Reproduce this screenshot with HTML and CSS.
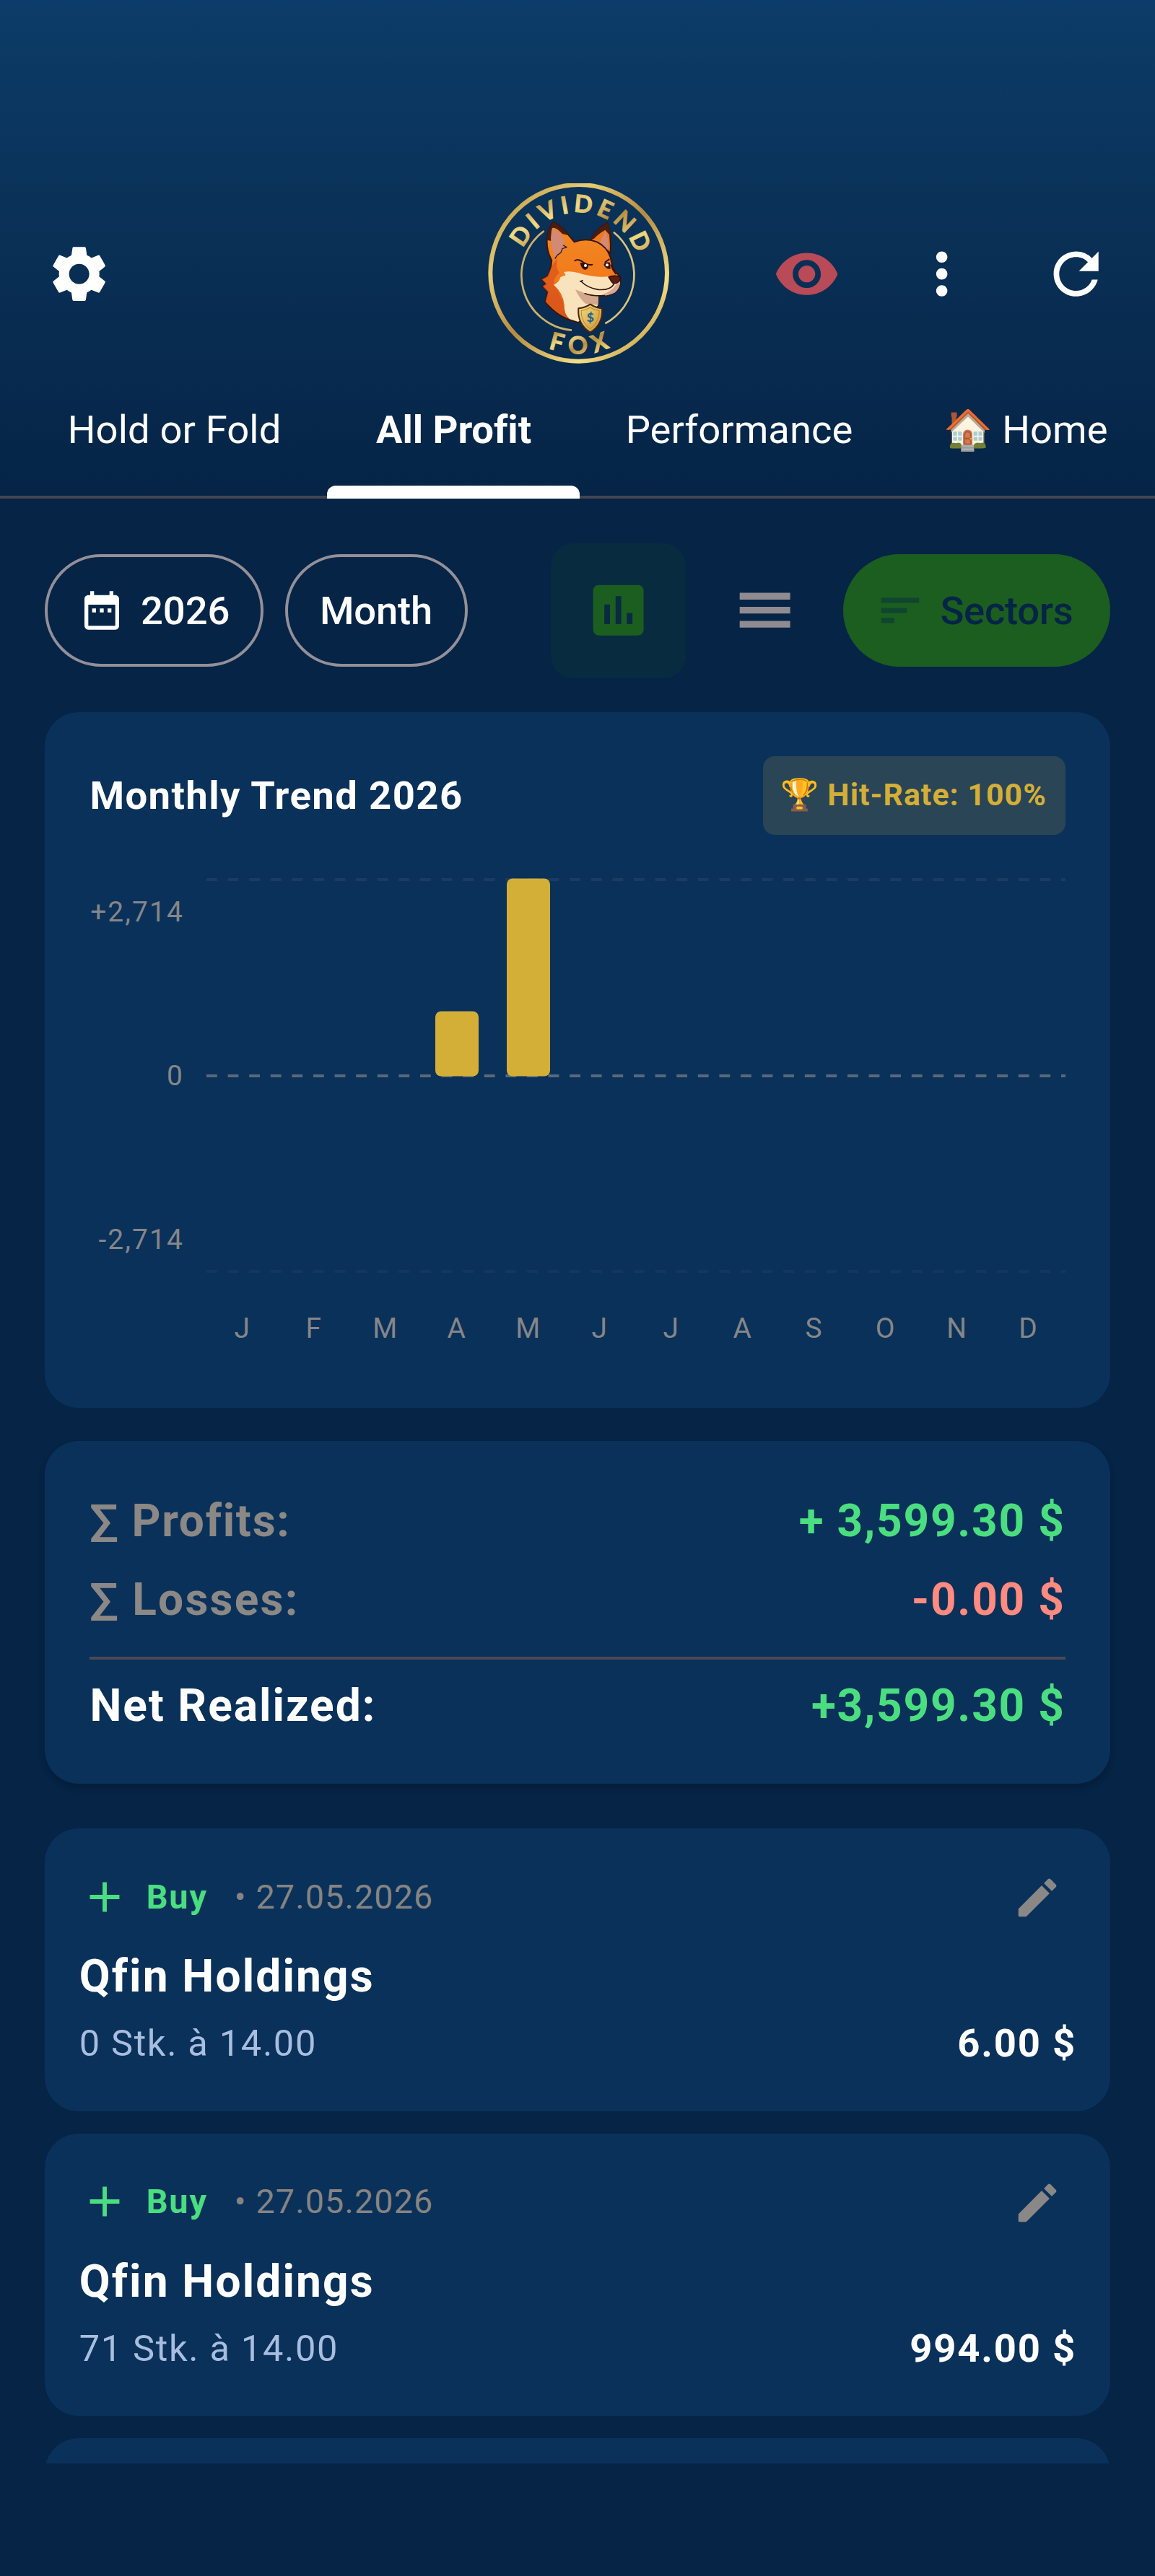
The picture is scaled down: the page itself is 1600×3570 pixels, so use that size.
FILE: index.html
```html
<!DOCTYPE html>
<html lang="en">
<head>
<meta charset="utf-8">
<title>Dividend Fox</title>
<link rel="stylesheet" href="styles.css">
</head>
<body>
<svg class="defs" aria-hidden="true">
  <symbol id="i-plus" viewBox="0 0 24 24"><path d="M19 13h-6v6h-2v-6H5v-2h6V5h2v6h6v2z"/></symbol>
  <symbol id="i-edit" viewBox="0 0 24 24"><path d="M3 17.46v3.04c0 .28.22.5.5.5h3.04c.13 0 .26-.05.35-.15L17.81 9.94l-3.75-3.75L3.15 17.1c-.1.1-.15.22-.15.36zM20.71 7.04a.996.996 0 0 0 0-1.41l-2.34-2.34a.996.996 0 0 0-1.41 0l-1.83 1.83 3.75 3.75 1.83-1.83z"/></symbol>
</svg>

<header class="header">
  <div class="toolbar">
    <button class="icon-btn"><svg class="icon" viewBox="0 0 24 24"><path d="M19.14 12.94c.04-.3.06-.61.06-.94 0-.32-.02-.64-.07-.94l2.03-1.58a.49.49 0 0 0 .12-.61l-1.92-3.32a.488.488 0 0 0-.59-.22l-2.39.96c-.5-.38-1.03-.7-1.62-.94l-.36-2.54a.484.484 0 0 0-.48-.41h-3.84c-.24 0-.43.17-.47.41l-.36 2.54c-.59.24-1.13.57-1.62.94l-2.39-.96c-.22-.08-.47 0-.59.22L2.74 8.87c-.12.21-.08.47.12.61l2.03 1.58c-.05.3-.09.63-.09.94s.02.64.07.94l-2.03 1.58a.49.49 0 0 0-.12.61l1.92 3.32c.12.22.37.29.59.22l2.39-.96c.5.38 1.03.7 1.62.94l.36 2.54c.05.24.24.41.48.41h3.84c.24 0 .44-.17.47-.41l.36-2.54c.59-.24 1.13-.56 1.62-.94l2.39.96c.22.08.47 0 .59-.22l1.92-3.32c.12-.22.07-.47-.12-.61l-2.01-1.58zM12 15.6c-1.98 0-3.6-1.62-3.6-3.6s1.62-3.6 3.6-3.6 3.6 1.62 3.6 3.6-1.62 3.6-3.6 3.6z"/></svg></button>

    <svg class="logo" viewBox="102 74 756 756">
      <defs>
        <linearGradient id="gold" x1="0" y1="0" x2="1" y2="1">
          <stop offset="0" stop-color="#c39a45"/><stop offset=".2" stop-color="#c39a45"/>
          <stop offset=".36" stop-color="#f2dc86"/><stop offset=".55" stop-color="#b88d3f"/>
          <stop offset=".78" stop-color="#f0d87c"/><stop offset="1" stop-color="#b58a3c"/>
        </linearGradient>
        <linearGradient id="rim" gradientUnits="userSpaceOnUse" x1="200" y1="150" x2="760" y2="760">
          <stop offset="0" stop-color="#c9a64f"/><stop offset=".2" stop-color="#e6cd75"/>
          <stop offset=".5" stop-color="#b58b3f"/><stop offset=".82" stop-color="#f3df86"/>
          <stop offset="1" stop-color="#c9a24c"/>
        </linearGradient>
        <linearGradient id="fur" x1="0" y1="0" x2="0" y2="1">
          <stop offset="0" stop-color="#f08a24"/><stop offset=".55" stop-color="#f37a1c"/><stop offset="1" stop-color="#d4531a"/>
        </linearGradient>
        <linearGradient id="shield" x1="0" y1="0" x2="1" y2="1">
          <stop offset="0" stop-color="#f4dd85"/><stop offset="1" stop-color="#c8922f"/>
        </linearGradient>
        <path id="arc-top" d="M230 447a252 252 0 0 1 504 0"/>
        <path id="arc-bottom" d="M146 447a336 336 0 0 0 672 0"/>
      </defs>
      <circle cx="482" cy="447" r="367" fill="none" stroke="url(#rim)" stroke-width="18"/>
      <path d="M338 272A229 229 0 0 0 453 685" fill="none" stroke="#cdb169" stroke-width="8"/>
      <path d="M627 277A229 229 0 0 1 592 657" fill="none" stroke="#dcc47a" stroke-width="8"/>
      <text class="logo-text logo-top"><textPath href="#arc-top" startOffset="52.4%" text-anchor="middle">DIVIDEND</textPath></text>
      <text class="logo-text logo-bottom"><textPath href="#arc-bottom" startOffset="51.6%" text-anchor="middle">FOX</textPath></text>
      <g transform="translate(180 180)" stroke-linejoin="round" stroke-linecap="round">
        <path d="M350 136Q372 84 421 58Q438 105 434 186L400 150Z" fill="#ef7a1e" stroke="#3d140d" stroke-width="6"/>
        <path d="M352 128Q376 82 421 58Q434 80 433 112L412 88Q384 104 366 124Z" fill="#4a1c12"/>
        <path d="M390 140L414 92Q424 124 427 160L420 172Z" fill="#d58b72"/>
        <path d="M197 55Q236 76 262 112L284 138Q332 120 378 138Q420 158 434 202L438 222L446 250L466 274Q480 284 474 304Q474 330 452 348Q424 364 384 362L382 402L300 472Q216 456 162 386L174 346L152 322L166 312L148 294L172 280Q188 250 190 214Q168 176 170 130Q174 84 197 55Z" fill="url(#fur)" stroke="#3d140d" stroke-width="6"/>
        <path d="M172 280L188 244Q196 224 214 206Q204 246 222 266Q200 284 198 312L218 344Q236 392 256 448Q196 424 164 386L174 346L152 322L166 312L148 294Z" fill="#d9541b" opacity=".75"/>
        <path d="M170 130Q174 84 197 55Q236 76 258 110L234 104Q208 76 192 80Q184 100 190 134Z" fill="#4a1c12"/>
        <path d="M194 84Q226 96 242 132L238 156L252 160L222 190L204 206Q186 160 186 120Z" fill="#d28a74"/>
        <path d="M252 160L234 166L228 182L214 192L204 206M238 152L252 160" fill="none" stroke="#3d140d" stroke-width="4"/>
        <path d="M240 263Q270 256 318 272Q372 286 424 282L436 306Q460 318 474 302Q474 330 452 348Q424 364 384 362L382 402L300 470L264 458Q240 436 242 400Q238 350 198 316Q222 306 226 284L248 276Z" fill="#f8e3bd"/>
        <path d="M288 336L332 352Q360 362 384 362L382 400L330 394Q304 372 288 336Z" fill="#d3a88c"/>
        <path d="M474 302Q474 330 452 348Q424 362 390 360Q440 346 458 314Z" fill="#d9a792"/>
        <path d="M426 284Q440 276 468 280Q480 288 472 298Q460 314 444 310Q436 300 426 284Z" fill="#5a1d14" stroke="#2b0d0a" stroke-width="4"/>
        <path d="M308 302Q312 300 318 298M312 302Q340 330 384 336Q432 340 448 314M328 352Q360 364 410 361" fill="none" stroke="#3a120c" stroke-width="5"/>
        <path d="M286 216Q298 206 318 220Q338 236 358 232M412 222L428 210M436 234Q444 256 456 270" fill="none" stroke="#3a120c" stroke-width="6"/>
        <path d="M308 224Q324 222 342 236Q342 252 328 254Q312 250 308 224Z" fill="#34130f"/>
        <path d="M406 232Q414 218 432 224L434 250Q414 252 406 232Z" fill="#34130f"/>
        <circle cx="330" cy="236" r="6" fill="#fff"/><circle cx="420" cy="234" r="6" fill="#fff"/>
        <path d="M350 397Q372 412 399 414Q404 480 350 514Q296 480 301 414Q328 412 350 397Z" fill="url(#shield)" stroke="#4a2413" stroke-width="6"/>
        <path d="M350 411Q370 422 388 424Q388 472 350 499Q312 472 312 424Q330 422 350 411Z" fill="none" stroke="#b98327" stroke-width="3"/>
        <text class="logo-dollar" x="350" y="471" text-anchor="middle">$</text>
      </g>
    </svg>

    <div class="actions">
      <button class="icon-btn"><svg class="icon icon-eye" viewBox="0 0 24 24"><path d="M12 4.5C7 4.5 2.73 7.61 1 12c1.73 4.39 6 7.5 11 7.5s9.27-3.11 11-7.5c-1.73-4.39-6-7.5-11-7.5zM12 17c-2.76 0-5-2.24-5-5s2.24-5 5-5 5 2.24 5 5-2.24 5-5 5zm0-8c-1.66 0-3 1.34-3 3s1.34 3 3 3 3-1.34 3-3-1.34-3-3-3z"/></svg></button>
      <button class="icon-btn"><svg class="icon" viewBox="0 0 24 24"><path d="M12 8c1.1 0 2-.9 2-2s-.9-2-2-2-2 .9-2 2 .9 2 2 2zm0 2c-1.1 0-2 .9-2 2s.9 2 2 2 2-.9 2-2-.9-2-2-2zm0 6c-1.1 0-2 .9-2 2s.9 2 2 2 2-.9 2-2-.9-2-2-2z"/></svg></button>
      <button class="icon-btn"><svg class="icon" viewBox="0 0 24 24"><path d="M17.65 6.35A7.958 7.958 0 0 0 12 4c-4.42 0-7.99 3.58-7.99 8s3.57 8 7.99 8c3.73 0 6.84-2.55 7.73-6h-2.08A5.99 5.99 0 0 1 12 18c-3.31 0-6-2.69-6-6s2.69-6 6-6c1.66 0 3.14.69 4.22 1.78L13 11h7V4l-2.35 2.35z"/></svg></button>
    </div>
  </div>

  <nav class="tabs">
    <a class="tab">Hold or Fold</a>
    <a class="tab tab-active">All Profit</a>
    <a class="tab">Performance</a>
    <a class="tab">🏠 Home</a>
  </nav>
</header>

<main class="content">
  <div class="controls">
    <button class="chip"><svg class="chip-icon" viewBox="0 0 24 24"><path d="M9 11H7v2h2v-2zm4 0h-2v2h2v-2zm4 0h-2v2h2v-2zm2-7h-1V2h-2v2H8V2H6v2H5c-1.11 0-1.99.9-1.99 2L3 20a2 2 0 0 0 2 2h14c1.1 0 2-.9 2-2V6c0-1.1-.9-2-2-2zm0 16H5V9h14v11z"/></svg>2026</button>
    <button class="chip chip-month">Month</button>
    <div class="views">
      <button class="view view-on"><svg class="icon" viewBox="0 0 24 24"><path d="M19 3H5c-1.1 0-2 .9-2 2v14c0 1.1.9 2 2 2h14c1.1 0 2-.9 2-2V5c0-1.1-.9-2-2-2zM9 17H7v-7h2v7zm4 0h-2V7h2v10zm4 0h-2v-4h2v4z"/></svg></button>
      <button class="view"><svg class="icon" viewBox="0 0 24 24"><path d="M3 5.8h18v2.4H3zM3 10.8h18v2.4H3zM3 15.8h18v2.4H3z"/></svg></button>
      <button class="sectors"><svg class="sort-icon" viewBox="0 0 24 24"><path d="M3 18h6.2v-2.4H3V18zM3 6v2.4h18V6H3zm0 7.2h12.2v-2.4H3v2.4z"/></svg>Sectors</button>
    </div>
  </div>

  <section class="card trend">
    <div class="trend-head">
      <h2 class="trend-title">Monthly Trend 2026</h2>
      <span class="badge">🏆 Hit-Rate: 100%</span>
    </div>
    <div class="chart">
      <div class="y-axis"><span>+2,714</span><span>0</span><span>-2,714</span></div>
      <svg class="plot" viewBox="0 0 1190 550">
        <g class="grid-lines">
          <line class="faint" x1="0" x2="1190" y1="3" y2="3"/>
          <line class="zero" x1="0" x2="1190" y1="275" y2="275"/>
          <line class="fainter" x1="0" x2="1190" y1="546" y2="546"/>
        </g>
        <rect class="bar" x="317" y="185.5" width="60" height="90" rx="8"/>
        <rect class="bar" x="416" y="1.5" width="60" height="274" rx="8"/>
      </svg>
    </div>
    <div class="x-axis"><span>J</span><span>F</span><span>M</span><span>A</span><span>M</span><span>J</span><span>J</span><span>A</span><span>S</span><span>O</span><span>N</span><span>D</span></div>
  </section>

  <section class="card summary">
    <div class="sum-row muted"><span class="profits">∑ Profits:</span><span class="gain">+ 3,599.30 $</span></div>
    <div class="sum-row muted"><span class="losses">∑ Losses:</span><span class="loss">-0.00 $</span></div>
    <hr class="rule">
    <div class="sum-row"><span>Net Realized:</span><span class="gain">+3,599.30 $</span></div>
  </section>

  <div class="list">
    <article class="card trade">
      <div class="trade-head"><svg class="small-icon plus"><use href="#i-plus"/></svg><b class="buy">Buy</b><span class="date">• 27.05.2026</span><button class="edit"><svg class="small-icon"><use href="#i-edit"/></svg></button></div>
      <h3 class="trade-name">Qfin Holdings</h3>
      <div class="trade-foot"><span class="qty">0 Stk. à 14.00</span><b class="amount">6.00 $</b></div>
    </article>
    <article class="card trade">
      <div class="trade-head"><svg class="small-icon plus"><use href="#i-plus"/></svg><b class="buy">Buy</b><span class="date">• 27.05.2026</span><button class="edit"><svg class="small-icon"><use href="#i-edit"/></svg></button></div>
      <h3 class="trade-name">Qfin Holdings</h3>
      <div class="trade-foot"><span class="qty">71 Stk. à 14.00</span><b class="amount">994.00 $</b></div>
    </article>
    <article class="card trade"></article>
  </div>
</main>
</body>
</html>
```
FILE: styles.css
```css
* { box-sizing: border-box; }

body {
  margin: 0;
  width: 1600px;
  height: 3570px;
  overflow: hidden;
  background: #052446;
  color: #fff;
  font-family: Roboto, "Noto Sans", sans-serif;
  font-size: 54.4px;
}

button {
  margin: 0;
  padding: 0;
  border: 0;
  background: none;
  color: inherit;
  font: inherit;
}

h2, h3 { margin: 0; }

svg { display: block; fill: currentColor; }

.defs { position: absolute; width: 0; height: 0; }

.icon { width: 93.3px; height: 93.3px; }
.icon-eye { color: #b94a57; }

/* Header */
.header {
  height: 690.5px;
  padding-top: 239.5px;
  background: linear-gradient(#0c3c69, #0a3056 48%, #052446);
}

.toolbar {
  display: grid;
  grid-template-columns: 1fr auto 1fr;
  align-items: center;
  height: 280px;
  padding: 0 15.6px 0 16.6px;
}

.icon-btn {
  display: flex;
  align-items: center;
  justify-content: center;
  width: 186.7px;
  height: 186.7px;
}

.actions { display: flex; justify-content: flex-end; }

.logo { width: 252px; height: 252px; }

.logo-text {
  font-family: Lato, sans-serif;
  font-weight: 700;
  font-size: 100px;
  fill: url(#gold);
  stroke: url(#gold);
  stroke-width: 3px;
}
.logo-top { letter-spacing: 16px; }
.logo-bottom { letter-spacing: 30px; }
.logo-dollar {
  font-family: Lato, sans-serif;
  font-weight: 900;
  font-size: 52px;
  fill: #1c6590;
}

.tabs {
  display: flex;
  height: 171px;
  padding-left: 30.5px;
  border-bottom: 4px solid #45454f;
  line-height: 151px;
  white-space: nowrap;
}

.tab { position: relative; flex: none; min-width: 350px; padding: 0 62.2px 0 63.2px; text-align: center; }
.tab:first-child { padding-right: 64px; letter-spacing: .1px; }
.tab-active { padding: 0; font-weight: 700; letter-spacing: -.1px; }
.tab-active::after {
  content: "";
  position: absolute;
  left: 0;
  right: 0;
  bottom: -4px;
  height: 18px;
  border-radius: 12px 12px 0 0;
  background: #fff;
}

/* Body */
.content {
  display: flex;
  flex-direction: column;
  height: 2723.5px;
  padding: 62px 62.2px 0;
  overflow: hidden;
}

.controls {
  display: flex;
  align-items: center;
  flex: none;
  gap: 30.6px;
  height: 187px;
  margin-bottom: 47.2px;
  font-weight: 500;
}

.chip {
  display: flex;
  align-items: center;
  gap: 22px;
  width: 302.6px;
  height: 156px;
  padding-left: 42.7px;
  border: 4px solid #938f99;
  border-radius: 78px;
}
.chip-month { width: 252.6px; padding-left: 43.5px; letter-spacing: -.2px; }
.chip-icon { width: 64px; height: 64px; }

.views { display: flex; align-items: center; gap: 15.6px; margin-left: auto; }

.view {
  display: flex;
  align-items: center;
  justify-content: center;
  width: 187px;
  height: 187px;
  color: #8f8b90;
}
.view-on { border-radius: 31px; background: #082b40; color: #1b5e20; }

.sectors {
  display: flex;
  align-items: center;
  gap: 20px;
  width: 369.4px;
  height: 156px;
  padding-left: 44px;
  border-radius: 78px;
  background: #1b5e20;
  color: #052446;
  letter-spacing: -.3px;
}
.sort-icon { width: 70px; height: 70px; color: #10452f; }

.card { flex: none; border-radius: 47px; background: #0a315a; }

/* Monthly trend */
.trend { height: 964.3px; padding: 61.5px 62.2px 0; }

.trend-head { display: flex; align-items: center; justify-content: space-between; height: 109px; }
.trend-title { font-size: 54.4px; font-weight: 700; letter-spacing: 1.42px; line-height: 107px; }

.badge {
  width: 419px;
  height: 109px;
  padding-left: 24px;
  border-radius: 16px;
  background: #2a4555;
  color: #d4af37;
  font-size: 42.8px;
  font-weight: 700;
  line-height: 107px;
  letter-spacing: 1.05px;
  white-space: nowrap;
}

.chart { display: flex; align-items: center; justify-content: space-between; height: 550px; margin-top: 58.5px; }

.y-axis {
  display: flex;
  flex-direction: column;
  justify-content: space-between;
  width: 130.5px;
  height: 498px;
  color: #868688;
  font-size: 38.9px;
  line-height: 44px;
  letter-spacing: 2.1px;
  text-align: right;
}

.plot { width: 1190px; height: 550px; }
.grid-lines { stroke: #8e8e8e; stroke-width: 4; stroke-dasharray: 14.8 14.8; }
.zero { opacity: .6; }
.faint { opacity: .12; }
.fainter { opacity: .07; }
.bar { fill: #d4af37; }

.x-axis {
  display: grid;
  grid-template-columns: repeat(12, 1fr);
  width: 1190px;
  margin: 52px 0 0 auto;
  padding-right: 2px;
  color: #868688;
  font-size: 38.9px;
  line-height: 46px;
  text-align: center;
}

/* Totals */
.summary {
  height: 475px;
  margin-top: 46px;
  padding: 64px 62.2px 0;
  box-shadow: 0 6px 10px rgba(0, 0, 0, .2);
  font-size: 62.2px;
  font-weight: 700;
}
.sum-row { display: flex; justify-content: space-between; line-height: 93px; letter-spacing: 2px; }
.sum-row + .sum-row { margin-top: 16px; }
.sum-row .gain, .sum-row .loss { letter-spacing: 1.75px; }
.muted { color: #8b8886; }
.gain { color: #4ade80; }
.loss { color: #ff8a80; }
.profits { letter-spacing: 1.75px; }
.losses { letter-spacing: 2.2px; }
.rule { height: 4px; margin: 33px 0 17px; border: 0; background: #4c4955; }

/* Trades */
.list { display: flex; flex-direction: column; gap: 30.6px; margin-top: 62.5px; }

.trade { height: 391.7px; padding: 48px 46.7px 0 47.5px; }

.trade-head { display: flex; align-items: center; height: 93px; font-size: 46.7px; }
.small-icon { width: 70px; height: 70px; }
.plus { color: #4ade80; }
.buy { margin-left: 23px; color: #4ade80; letter-spacing: 1.88px; }
.date { margin-left: 37px; color: #868482; letter-spacing: 1.15px; }
.edit {
  display: flex;
  align-items: center;
  justify-content: center;
  width: 109px;
  height: 93px;
  margin-left: auto;
  padding-top: 3px;
  color: #8a8886;
}

.trade-name { margin-top: 17px; font-size: 62.2px; font-weight: 700; line-height: 93px; letter-spacing: 2.15px; }

.trade-foot { display: flex; justify-content: space-between; margin-top: 8px; line-height: 78px; }
.qty { color: #a9bedf; font-size: 50.6px; letter-spacing: 1.65px; }
.amount { letter-spacing: 1.8px; }
```
